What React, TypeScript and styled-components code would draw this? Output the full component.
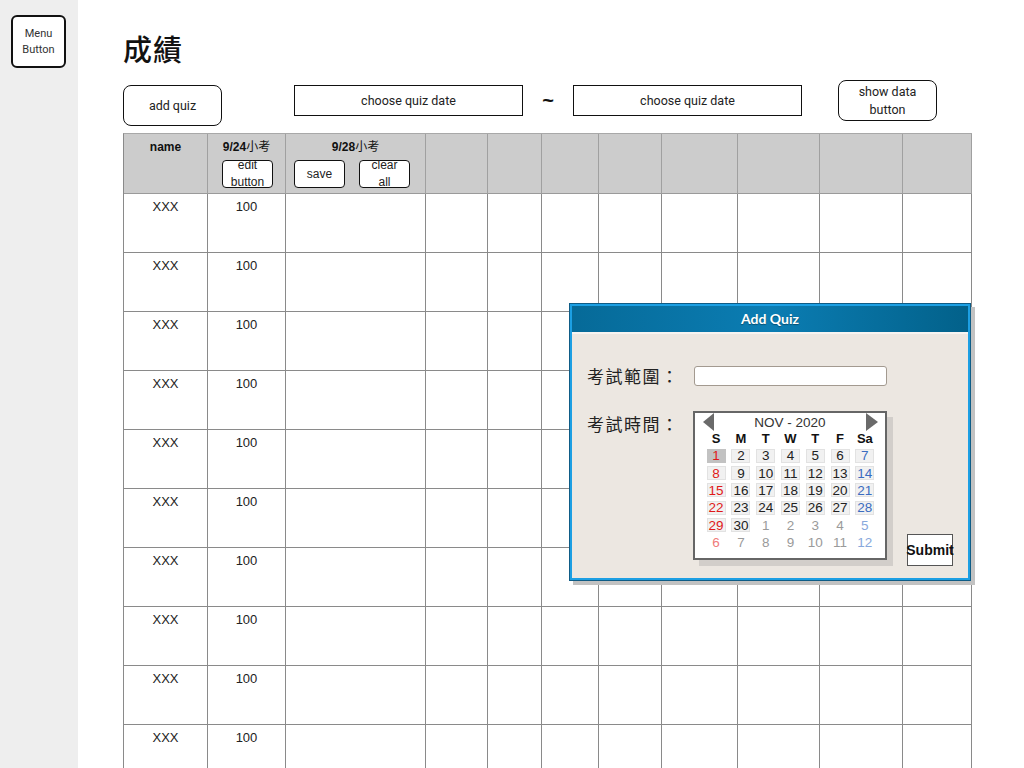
import React from "react";
import styled, { createGlobalStyle, css } from "styled-components";

const GlobalStyle = createGlobalStyle`
  html, body {
    margin: 0;
    padding: 0;
    background: #ffffff;
    font-family: "Roboto", "Liberation Sans", "Noto Sans CJK TC", sans-serif;
    color: #222;
  }
  * {
    box-sizing: border-box;
  }
`;

const COLUMNS = [84, 78, 140, 62, 54, 57, 63, 76, 82, 83, 69];
const ROW_COUNT = 10;

type DayKind = "normal" | "sun" | "sat";
type Day = { n: number; kind: DayKind; other?: boolean; selected?: boolean };

const buildDays = (): Day[] => {
  const days: Day[] = [];
  for (let i = 1; i <= 30; i++) {
    const col = (i - 1) % 7;
    days.push({
      n: i,
      kind: col === 0 ? "sun" : col === 6 ? "sat" : "normal",
      selected: i === 1,
    });
  }
  for (let i = 1; i <= 12; i++) {
    const col = (i + 29) % 7;
    days.push({
      n: i,
      kind: col === 0 ? "sun" : col === 6 ? "sat" : "normal",
      other: true,
    });
  }
  return days;
};

const WEEKDAYS = ["S", "M", "T", "W", "T", "F", "Sa"];

const App: React.FC = () => {
  const days = buildDays();

  return (
    <Page>
      <GlobalStyle />
      <Sidebar>
        <MenuButton>
          Menu
          <br />
          Button
        </MenuButton>
      </Sidebar>

      <Main>
        <Title>成績</Title>

        <Toolbar>
          <RoundButton $offset={5}>add quiz</RoundButton>
          <DateBox $gap={72}>choose quiz date</DateBox>
          <Tilde>~</Tilde>
          <DateBox>choose quiz date</DateBox>
          <RoundButton $offset={0} $gap={36}>
            show data
            <br />
            button
          </RoundButton>
        </Toolbar>

        <Table>
          <HeadCell>
            <HeadLabel>
              <b>name</b>
            </HeadLabel>
          </HeadCell>
          <HeadCell>
            <HeadLabel>
              <b>9/24</b>小考
            </HeadLabel>
            <HeadActions $nudge={2}>
              <MiniButton>
                <span>
                  edit
                  <br />
                  button
                </span>
              </MiniButton>
            </HeadActions>
          </HeadCell>
          <HeadCell>
            <HeadLabel>
              <b>9/28</b>小考
            </HeadLabel>
            <HeadActions $nudge={-7}>
              <MiniButton>
                <span>save</span>
              </MiniButton>
              <MiniButton>
                <span>
                  clear
                  <br />
                  all
                </span>
              </MiniButton>
            </HeadActions>
          </HeadCell>
          {COLUMNS.slice(3).map((_, i) => (
            <HeadCell key={`h${i}`} />
          ))}

          {Array.from({ length: ROW_COUNT }).map((_, r) => (
            <React.Fragment key={r}>
              <BodyCell>XXX</BodyCell>
              <BodyCell>100</BodyCell>
              {COLUMNS.slice(2).map((__, c) => (
                <BodyCell key={c} />
              ))}
            </React.Fragment>
          ))}
        </Table>
      </Main>

      <Dialog>
        <DialogHeader>Add Quiz</DialogHeader>
        <DialogBody>
          <FieldRow>
            <FieldLabel>考試範圍：</FieldLabel>
            <TextInput />
          </FieldRow>
          <FieldRow $top>
            <FieldLabel $shift={2}>考試時間：</FieldLabel>
            <Calendar>
              <CalHeader>
                <Arrow $dir="left" />
                <span>NOV - 2020</span>
                <Arrow $dir="right" />
              </CalHeader>
              <CalGrid>
                {WEEKDAYS.map((w, i) => (
                  <WeekDay key={i}>{w}</WeekDay>
                ))}
                {days.map((d, i) => (
                  <DayCell
                    key={i}
                    $kind={d.kind}
                    $other={d.other}
                    $selected={d.selected}
                  >
                    {d.n}
                  </DayCell>
                ))}
              </CalGrid>
            </Calendar>
            <SubmitButton>Submit</SubmitButton>
          </FieldRow>
        </DialogBody>
      </Dialog>
    </Page>
  );
};

export default App;

const Page = styled.div`
  position: relative;
  display: flex;
  min-height: 768px;
  width: 1024px;
  overflow: hidden;
`;

const Sidebar = styled.aside`
  flex: 0 0 78px;
  background: #eeeeee;
  padding: 15px 0 0 11px;
`;

const MenuButton = styled.button`
  width: 55px;
  height: 53px;
  border: 2px solid #111;
  border-radius: 6px;
  background: #fff;
  font-family: "Roboto", sans-serif;
  font-size: 11px;
  line-height: 16px;
  color: #333;
  padding: 0;
`;

const Main = styled.main`
  flex: 1;
  padding: 31px 0 0 45px;
`;

const Title = styled.h1`
  margin: 0;
  font-family: "Noto Sans CJK TC", sans-serif;
  font-size: 29px;
  font-weight: 500;
  line-height: 34px;
  color: #111;
  letter-spacing: 1px;
`;

const Toolbar = styled.div`
  display: flex;
  align-items: flex-start;
  height: 46px;
  margin-top: 15px;
`;

const RoundButton = styled.button<{ $offset: number; $gap?: number }>`
  width: 99px;
  height: 41px;
  margin-top: ${(p) => p.$offset}px;
  margin-left: ${(p) => p.$gap ?? 0}px;
  border: 1px solid #111;
  border-radius: 8px;
  background: #fff;
  font-family: "Roboto", sans-serif;
  font-size: 12.5px;
  line-height: 18px;
  color: #222;
  padding: 0;
`;

const DateBox = styled.div<{ $gap?: number }>`
  width: 229px;
  height: 31px;
  margin-top: 5px;
  margin-left: ${(p) => p.$gap ?? 0}px;
  border: 1px solid #111;
  display: flex;
  align-items: center;
  justify-content: center;
  font-family: "Roboto", sans-serif;
  font-size: 12.5px;
  color: #222;
`;

const Tilde = styled.div`
  width: 50px;
  height: 31px;
  margin-top: 5px;
  display: flex;
  align-items: center;
  justify-content: center;
  font-family: "Liberation Sans", sans-serif;
  font-size: 20px;
  font-weight: 700;
  color: #111;
`;

const Table = styled.div`
  margin-top: 7px;
  display: grid;
  grid-template-columns: ${COLUMNS.map((c) => `${c}px`).join(" ")};
  grid-auto-rows: 59px;
  grid-template-rows: 60px;
  width: ${COLUMNS.reduce((a, b) => a + b, 0) + 1}px;
  border-left: 1px solid #8a8a8a;
  border-top: 1px solid #a8a8a8;
  font-family: "Liberation Sans", "Noto Sans CJK TC", sans-serif;
`;

const cellBase = css`
  border-right: 1px solid #8a8a8a;
  border-bottom: 1px solid #8a8a8a;
  text-align: center;
`;

const HeadCell = styled.div`
  ${cellBase};
  border-right-color: #a0a0a0;
  border-bottom-color: #9a9a9a;
  background: #cccccc;
  padding-top: 6px;
  display: flex;
  flex-direction: column;
  align-items: center;
`;

const HeadLabel = styled.div`
  font-size: 12px;
  line-height: 14px;
  color: #111;
  font-family: "Liberation Sans", "Noto Sans CJK TC", sans-serif;
`;

const HeadActions = styled.div<{ $nudge: number }>`
  display: flex;
  gap: 14px;
  margin-top: 6px;
  margin-left: ${(p) => p.$nudge}px;
`;

const MiniButton = styled.button`
  width: 51px;
  height: 28px;
  padding: 0;
  border: 1px solid #111;
  border-radius: 4px;
  background: #fff;
  overflow: visible;
  display: flex;
  align-items: center;
  justify-content: center;
  font-family: "Liberation Sans", sans-serif;
  font-size: 12px;
  line-height: 17px;
  color: #222;
`;

const BodyCell = styled.div`
  ${cellBase};
  padding-top: 5px;
  font-size: 13px;
  line-height: 15px;
  color: #222;
`;

const Dialog = styled.section`
  position: absolute;
  left: 570px;
  top: 304px;
  width: 400px;
  height: 276px;
  border: 2px solid #1c9fe3;
  box-shadow: 0 0 0 1px #0f5c86, 4px 4px 0 1px #c2c2c2;
  background: #ece7e1;
  display: flex;
  flex-direction: column;
`;

const DialogHeader = styled.header`
  height: 28px;
  background: linear-gradient(to right, #066a98, #0b7db3 50%, #02618a);
  border-bottom: 2px solid #f6f4f1;
  color: #fff;
  font-family: "Lato", "Liberation Sans", sans-serif;
  font-size: 14px;
  font-weight: 700;
  line-height: 25px;
  text-align: center;
  text-shadow: 0 1px 1px rgba(0, 0, 0, 0.35);
`;

const DialogBody = styled.div`
  padding: 31px 15px 0 15px;
  display: flex;
  flex-direction: column;
  gap: 24px;
`;

const FieldRow = styled.div<{ $top?: boolean }>`
  display: flex;
  align-items: ${(p) => (p.$top ? "flex-end" : "center")};
`;

const FieldLabel = styled.div<{ $shift?: number }>`
  width: 107px;
  flex: none;
  align-self: ${(p) => (p.$shift !== undefined ? "flex-start" : "center")};
  margin-top: ${(p) => p.$shift ?? 0}px;
  font-family: "Noto Sans CJK TC", sans-serif;
  font-size: 17px;
  line-height: 22px;
  color: #222;
  letter-spacing: 1.5px;
`;

const TextInput = styled.input.attrs({ type: "text" })`
  width: 193px;
  height: 20px;
  border: 1px solid #a39a90;
  border-radius: 3px;
  background: #fff;
  outline: none;
`;

const Calendar = styled.div`
  width: 194px;
  height: 149px;
  margin-left: -1px;
  margin-bottom: 6px;
  border: 2px solid #666;
  background: #fff;
  box-shadow: 6px 6px 0 #d2ceca;
  font-family: "Liberation Sans", sans-serif;
`;

const CalHeader = styled.div`
  height: 18px;
  display: flex;
  align-items: center;
  justify-content: space-between;
  padding: 0 7px 0 8px;
  font-size: 13.5px;
  color: #333;
`;

const Arrow = styled.span<{ $dir: "left" | "right" }>`
  width: 0;
  height: 0;
  border-top: 9px solid transparent;
  border-bottom: 9px solid transparent;
  ${(p) =>
    p.$dir === "left"
      ? "border-right: 11px solid #6a6a6a;"
      : "border-left: 12px solid #6a6a6a;"}
`;

const CalGrid = styled.div`
  display: grid;
  grid-template-columns: repeat(7, 24.8px);
  grid-template-rows: 16px;
  grid-auto-rows: 17.4px;
  justify-content: center;
  margin-left: 1px;
`;

const WeekDay = styled.div`
  font-size: 13px;
  font-weight: 700;
  line-height: 16px;
  text-align: center;
  color: #111;
`;

const dayColor = (kind: DayKind, other?: boolean) => {
  if (kind === "sun") return other ? "#f07a7a" : "#e01818";
  if (kind === "sat") return other ? "#88a8dc" : "#3a6cc0";
  return other ? "#9a9a9a" : "#222";
};

const DayCell = styled.div<{
  $kind: DayKind;
  $other?: boolean;
  $selected?: boolean;
}>`
  justify-self: center;
  align-self: center;
  width: 19px;
  height: 14px;
  display: flex;
  align-items: center;
  justify-content: center;
  font-size: 13.5px;
  color: ${(p) => dayColor(p.$kind, p.$other)};
  background: ${(p) =>
    p.$other ? "transparent" : p.$selected ? "#c2c2c2" : "#f1f1f1"};
  border: 1px solid
    ${(p) => (p.$other ? "transparent" : p.$selected ? "#c2c2c2" : "#e2e2e2")};
`;

const SubmitButton = styled.button`
  width: 46px;
  height: 32px;
  margin-left: auto;
  padding: 0;
  border: 1px solid #555;
  background: #fff;
  overflow: visible;
  white-space: nowrap;
  display: flex;
  align-items: center;
  justify-content: center;
  font-family: "Liberation Sans", sans-serif;
  font-size: 14px;
  font-weight: 700;
  color: #111;
`;
